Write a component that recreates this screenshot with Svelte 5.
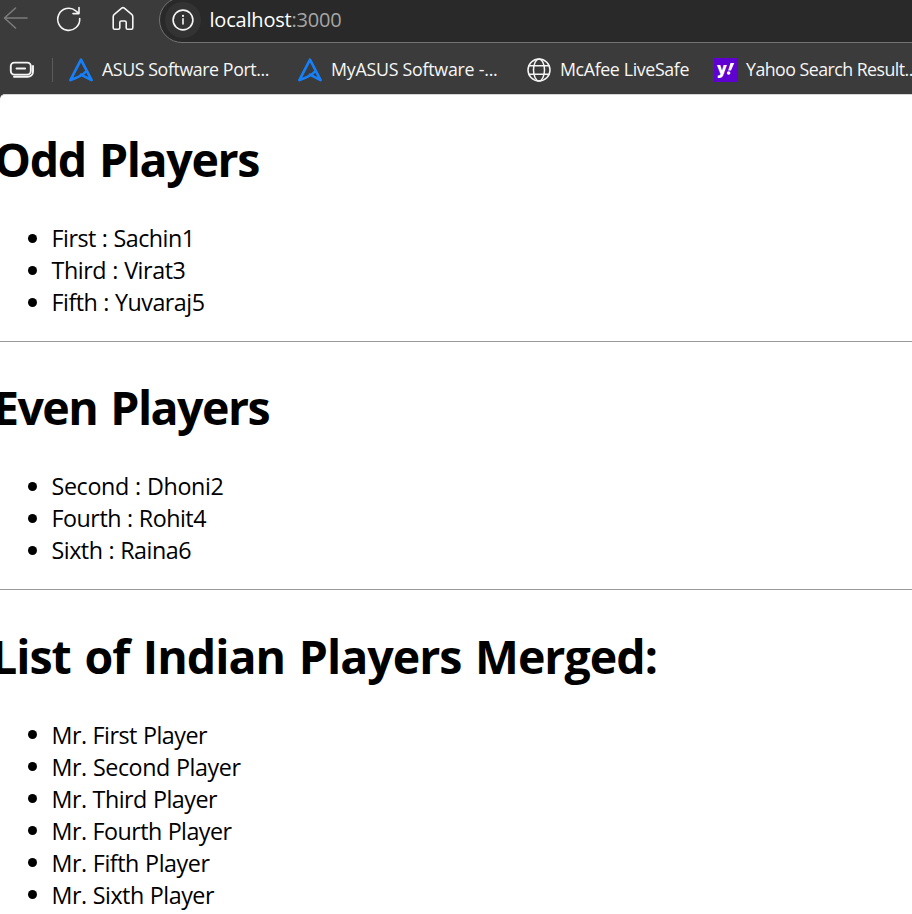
<script>
  const bookmarks = [
    { icon: 'asus', label: 'ASUS Software Port...', width: 167, gap: 29 },
    { icon: 'asus', label: 'MyASUS Software -...', width: 166.5, gap: 29.5 },
    { icon: 'globe', label: 'McAfee LiveSafe', width: 129, gap: 25 },
    { icon: 'yahoo', label: 'Yahoo Search Result...', width: 171, gap: 0 }
  ];

  const sections = [
    {
      title: 'Odd Players', width: 265, offset: -6,
      items: [
        { text: 'First : Sachin1', width: 143 },
        { text: 'Third : Virat3', width: 134 },
        { text: 'Fifth : Yuvaraj5', width: 153 }
      ]
    },
    {
      title: 'Even Players', width: 276, offset: -7,
      items: [
        { text: 'Second : Dhoni2', width: 172 },
        { text: 'Fourth : Rohit4', width: 154.5 },
        { text: 'Sixth : Raina6', width: 139.5 }
      ]
    },
    {
      title: 'List of Indian Players Merged:', width: 666, offset: -9,
      items: [
        { text: 'Mr. First Player', width: 155.5 },
        { text: 'Mr. Second Player', width: 189 },
        { text: 'Mr. Third Player', width: 165.5 },
        { text: 'Mr. Fourth Player', width: 180 },
        { text: 'Mr. Fifth Player', width: 158 },
        { text: 'Mr. Sixth Player', width: 162.5 }
      ]
    }
  ];

  // Tracks a label so that its advance width equals the given one.
  function fit(node, width) {
    const natural = node.getBoundingClientRect().width;
    node.style.letterSpacing = `${(width - natural) / node.textContent.length}px`;
  }
</script>

<div class="window">
  <header>
    <div class="toolbar">
      <svg class="back" width="28" height="28" viewBox="0 0 28 28"><path d="M27 14H4.500M15.500 4 4.500 14 15.500 24" /></svg>
      <svg class="reload" width="28" height="28" viewBox="0 0 28 28"><path d="M24.7 13.5A11 11 0 1 1 20.8 5.9L23.8 8.3M24 2.5V8.6H18" /></svg>
      <svg class="home" width="28" height="28" viewBox="0 0 28 28"><path d="M4.2 11.8c0-1 .4-1.8 1.1-2.4l7.4-6.2c.8-.7 1.8-.7 2.6 0l7.4 6.2c.7.6 1.1 1.4 1.1 2.4v11c0 .8-.6 1.4-1.4 1.4h-3.8c-.8 0-1.400-.6-1.400-1.400v-5.400c0-.8-.6-1.400-1.400-1.400h-3.600c-.8 0-1.400.6-1.400 1.400v5.400c0 .8-.6 1.400-1.400 1.400H5.600c-.8 0-1.400-.6-1.400-1.400z" /></svg>
      <div class="address">
        <span class="info">
          <svg width="24" height="24" viewBox="0 0 24 24"><circle cx="12" cy="12" r="9.900" /><path d="M12 10.800v5.200" /><circle class="dot" cx="12" cy="7.900" r="1.100" /></svg>
        </span>
        <span class="url" use:fit={132}>localhost<i>:3000</i></span>
      </div>
    </div>
    <div class="bookmarks">
      <svg class="tabs" width="26" height="20" viewBox="0 0 26 20"><rect x="1.800" y="2.600" width="20" height="12" rx="3.500" /><path d="M7.500 8.500h8.700M5 16.800h13.500c3.300 0 5.500-2.200 5.500-5.300V6" /></svg>
      <span class="divider"></span>
      {#each bookmarks as mark}
        <span class="bookmark" style:margin-right="{mark.gap}px">
          {#if mark.icon === 'asus'}
            <svg class="asus" width="24" height="24" viewBox="0 0 24 24"><path d="M1.400 22.100 12 1.600 22.600 22.100 11.900 16.600M1.400 22.100C6 20.500 12.500 18.500 17 13.500" /></svg>
          {:else if mark.icon === 'globe'}
            <svg class="globe" width="24" height="24" viewBox="0 0 24 24"><circle cx="12" cy="12" r="11" /><ellipse cx="12" cy="12" rx="5.500" ry="11" /><path d="M2 7.700h20M2 16.300h20" /></svg>
          {:else}
            <span class="yahoo"><b>y</b><svg width="9" height="15" viewBox="0 0 9 15"><path d="M4.500 1h4L5 9H2z" /><circle cx="2.500" cy="11.800" r="1.900" /></svg></span>
          {/if}
          <span class="label" use:fit={mark.width}>{mark.label}</span>
        </span>
      {/each}
    </div>
  </header>

  <main>
    {#each sections as section, index}
      {#if index > 0}<hr />{/if}
      <h1 style:margin-left="{section.offset}px"><span use:fit={section.width}>{section.title}</span></h1>
      <ul>
        {#each section.items as item}
          <li><span use:fit={item.width}>{item.text}</span></li>
        {/each}
      </ul>
    {/each}
  </main>
</div>

<style>
  :global(body) { margin: 0; }
  .window {
    width: 912px;
    height: 914px;
    overflow: hidden;
    background: #3b3b3b;
    font-family: 'Open Sans', 'Noto Sans', sans-serif;
  }
  svg { display: block; flex: none; fill: none; stroke: #f5f5f5; stroke-width: 1.6; stroke-linecap: round; stroke-linejoin: round; }
  header { height: 94px; overflow: hidden; }
  .toolbar { display: flex; height: 43px; align-items: flex-start; }
  .back { margin: 4px 0 0 0; stroke: #7c7c7c; }
  .reload { margin: 5px 0 0 27px; }
  .home { margin: 5px 0 0 26px; }
  .address {
    display: flex;
    align-items: center;
    box-sizing: border-box;
    flex: none;
    width: 800px;
    height: 46px;
    margin: -3px 0 0 22px;
    padding-left: 5px;
    border: 1px solid #747474;
    border-radius: 23px;
    background: #292929;
  }
  .info { display: grid; place-items: center; width: 36px; height: 36px; border-radius: 50%; background: #333; }
  .dot { fill: #f5f5f5; stroke: none; }
  .url { margin-left: 8.500px; color: #fff; font-size: 20px; line-height: 28px; white-space: pre; }
  .url i { font-style: normal; color: #a6a6a6; }
  .bookmarks { display: flex; align-items: center; height: 51px; padding: 2px 0 0 9px; box-sizing: border-box; }
  .tabs { stroke-width: 1.9; }
  .divider { flex: none; width: 1px; height: 24px; margin: 0 16px 0 17px; background: #5b5b5b; }
  .bookmark { display: flex; flex: none; align-items: center; }
  .asus { stroke: #1680fa; stroke-width: 2.6; }
  .globe { stroke-width: 1.5; }
  .yahoo { display: flex; align-items: center; justify-content: center; width: 24px; height: 24px; background: #5f01d1; }
  .yahoo b { color: #fff; font-size: 16px; line-height: 20px; margin-top: -3px; font-weight: 800; }
  .yahoo svg { width: 9px; height: 14px; margin: -2px 0 0 -1px; fill: #fff; stroke: none; }
  .label { margin: -2px 0 0 9px; color: #f6f6f6; font-size: 17.800px; line-height: 24px; white-space: pre; }
  .yahoo + .label { margin-left: 8px; }
  main {
    height: 820px;
    overflow: hidden;
    box-sizing: border-box;
    padding-top: 31px;
    border-top: 1px solid #d4d4d4;
    border-top-left-radius: 5px;
    background: #fff;
    color: #000;
  }
  h1 { margin: 0 0 31px; padding-top: 2px; font-size: 46.500px; line-height: 63px; font-weight: 700; word-spacing: 2.500px; white-space: pre; }
  ul { margin: 0; padding: 0; list-style: none; }
  li { display: flex; align-items: center; height: 32px; padding-left: 28px; font-size: 23.300px; line-height: 32px; word-spacing: 0.500px; white-space: pre; }
  li::before { content: ''; width: 9px; height: 9px; margin-right: 14.500px; border-radius: 50%; background: #000; }
  hr { height: 1px; margin: 23px 0 32.300px; border: 0; background: #999; }
</style>
